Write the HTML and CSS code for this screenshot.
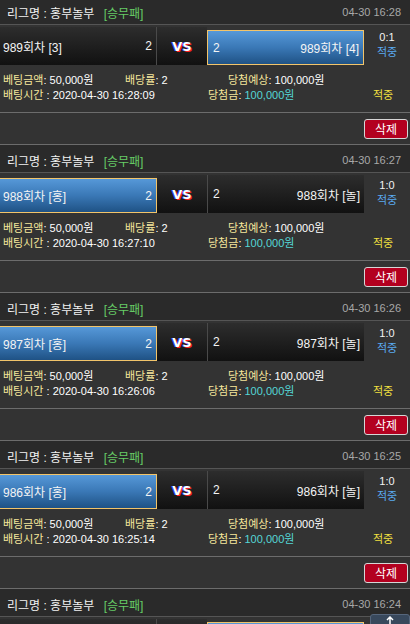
FILE: index.html
```html
<!DOCTYPE html>
<html lang="ko">
<head>
<meta charset="utf-8">
<link rel="stylesheet" href="styles.css">
</head>
<body>
<div class="list">

  <div class="bet">
    <div class="head"><span class="league">리그명 : 홍부놀부 <em>[승무패]</em></span><span class="time">04-30 16:28</span></div>
    <div class="match">
      <div class="team l"><span>989회차 [3]</span><span>2</span></div>
      <div class="vs">VS</div>
      <div class="team r on"><span>2</span><span>989회차 [4]</span></div>
      <div class="score"><div>0:1</div><div class="hit">적중</div></div>
    </div>
    <div class="info">
      <div class="row"><span class="c1"><b>베팅금액</b>: 50,000원</span><span class="c2"><b>배당률</b>: 2</span><span><b>당첨예상</b>: 100,000원</span></div>
      <div class="row"><span class="d1"><b>배팅시간</b> : 2020-04-30 16:28:09</span><span class="d2"><b>당첨금</b>: <i>100,000원</i></span><span class="res">적중</span></div>
    </div>
    <div class="actions"><button class="del">삭제</button></div>
  </div>

  <div class="bet">
    <div class="head"><span class="league">리그명 : 홍부놀부 <em>[승무패]</em></span><span class="time">04-30 16:27</span></div>
    <div class="match">
      <div class="team l on"><span>988회차 [홍]</span><span>2</span></div>
      <div class="vs">VS</div>
      <div class="team r"><span>2</span><span>988회차 [놀]</span></div>
      <div class="score"><div>1:0</div><div class="hit">적중</div></div>
    </div>
    <div class="info">
      <div class="row"><span class="c1"><b>베팅금액</b>: 50,000원</span><span class="c2"><b>배당률</b>: 2</span><span><b>당첨예상</b>: 100,000원</span></div>
      <div class="row"><span class="d1"><b>배팅시간</b> : 2020-04-30 16:27:10</span><span class="d2"><b>당첨금</b>: <i>100,000원</i></span><span class="res">적중</span></div>
    </div>
    <div class="actions"><button class="del">삭제</button></div>
  </div>

  <div class="bet">
    <div class="head"><span class="league">리그명 : 홍부놀부 <em>[승무패]</em></span><span class="time">04-30 16:26</span></div>
    <div class="match">
      <div class="team l on"><span>987회차 [홍]</span><span>2</span></div>
      <div class="vs">VS</div>
      <div class="team r"><span>2</span><span>987회차 [놀]</span></div>
      <div class="score"><div>1:0</div><div class="hit">적중</div></div>
    </div>
    <div class="info">
      <div class="row"><span class="c1"><b>베팅금액</b>: 50,000원</span><span class="c2"><b>배당률</b>: 2</span><span><b>당첨예상</b>: 100,000원</span></div>
      <div class="row"><span class="d1"><b>배팅시간</b> : 2020-04-30 16:26:06</span><span class="d2"><b>당첨금</b>: <i>100,000원</i></span><span class="res">적중</span></div>
    </div>
    <div class="actions"><button class="del">삭제</button></div>
  </div>

  <div class="bet">
    <div class="head"><span class="league">리그명 : 홍부놀부 <em>[승무패]</em></span><span class="time">04-30 16:25</span></div>
    <div class="match">
      <div class="team l on"><span>986회차 [홍]</span><span>2</span></div>
      <div class="vs">VS</div>
      <div class="team r"><span>2</span><span>986회차 [놀]</span></div>
      <div class="score"><div>1:0</div><div class="hit">적중</div></div>
    </div>
    <div class="info">
      <div class="row"><span class="c1"><b>베팅금액</b>: 50,000원</span><span class="c2"><b>배당률</b>: 2</span><span><b>당첨예상</b>: 100,000원</span></div>
      <div class="row"><span class="d1"><b>배팅시간</b> : 2020-04-30 16:25:14</span><span class="d2"><b>당첨금</b>: <i>100,000원</i></span><span class="res">적중</span></div>
    </div>
    <div class="actions"><button class="del">삭제</button></div>
  </div>

  <div class="bet">
    <div class="head"><span class="league">리그명 : 홍부놀부 <em>[승무패]</em></span><span class="time">04-30 16:24</span></div>
    <div class="match">
      <div class="team l"></div>
      <div class="vs"></div>
      <div class="team r on"></div>
      <div class="score"></div>
    </div>
  </div>

</div>
<div class="top-btn"><svg width="10" height="8" viewBox="0 0 10 8"><path d="M5 1 L5 8 M2 4 L5 1 L8 4" stroke="#fff" stroke-width="1.5" fill="none"/></svg></div>
</body>
</html>
```

FILE: styles.css
```css
html, body {
  margin: 0;
  padding: 0;
}
body {
  background: #333333;
  color: #eeeeee;
  font-family: "Liberation Sans", "Noto Sans CJK KR", sans-serif;
  font-size: 11px;
  overflow: hidden;
  height: 624px;
}
.list {
  margin-top: -4px;
}
.bet {
  border-top: 1px solid #6c6c6c;
}
.head {
  height: 28px;
  box-sizing: border-box;
  padding: 3px 9px 0 7px;
  background: #2a2a2a;
  border-bottom: 1px solid #555555;
  display: flex;
  align-items: center;
  justify-content: space-between;
}
.league {
  color: #f2f2f2;
  font-size: 12px;
}
.league em {
  font-style: normal;
  color: #66cc66;
  margin-left: 6px;
}
.time {
  color: #a8a8a8;
  font-size: 11px;
}
.match {
  display: flex;
  height: 41px;
  box-sizing: border-box;
  padding-top: 2px;
}
.team {
  width: 157px;
  height: 38px;
  box-sizing: border-box;
  padding: 0 4px 0 3px;
  display: flex;
  align-items: center;
  justify-content: space-between;
  background: linear-gradient(#2d2d2d, #111111);
  font-size: 12px;
  color: #f4f4f4;
}
.team.l {
  border-right: 1px solid #4a4a4a;
}
.team.r {
  border-left: 1px solid #4a4a4a;
  padding: 0 4px 0 5px;
}
.team.on {
  margin-top: 3px;
  height: 35px;
  border: 1px solid #f2c46a;
  background: linear-gradient(#5698d8, #3a78b6 50%, #1f5285);
}
.team.l.on {
  width: 157px;
  border-left: none;
}
.vs {
  width: 50px;
  height: 38px;
  background: linear-gradient(#2d2d2d, #111111);
  display: flex;
  align-items: center;
  justify-content: center;
  font-family: "DejaVu Sans", sans-serif;
  font-weight: bold;
  font-size: 13px;
  color: #ffffff;
  text-shadow: -1px 0 #2f45ff, 1px 1px #ff2020;
}
.score {
  width: 46px;
  box-sizing: border-box;
  padding-top: 3px;
  text-align: center;
  line-height: 15px;
  font-size: 11px;
  color: #f2f2f2;
}
.score .hit {
  color: #5aaaf0;
}
.info {
  height: 46px;
  box-sizing: border-box;
  padding: 7px 0 0 3px;
  line-height: 15px;
  font-size: 11px;
  color: #ffffff;
}
.info .row {
  display: flex;
}
.info b {
  font-weight: normal;
  color: #f6e79c;
}
.info i {
  font-style: normal;
  color: #55d6d6;
}
.c1 {
  width: 122px;
}
.c2 {
  width: 103px;
}
.d1 {
  width: 205px;
}
.d2 {
  width: 165px;
}
.res {
  color: #f2e040;
}
.actions {
  border-top: 1px solid #6c6c6c;
  height: 32px;
  box-sizing: border-box;
  display: flex;
  justify-content: flex-end;
  align-items: center;
  padding-right: 2px;
}
.del {
  width: 44px;
  height: 20px;
  padding: 0;
  margin: 0;
  background: #b3001f;
  border: 1px solid #d6d6d6;
  border-radius: 3px;
  color: #ffffff;
  font-family: "Noto Sans CJK KR", sans-serif;
  font-size: 12px;
  line-height: 18px;
}
.top-btn {
  position: fixed;
  right: 0;
  bottom: -22px;
  width: 40px;
  height: 32px;
  box-sizing: border-box;
  background: #38485c;
  border: 1px solid #56667c;
  border-radius: 3px;
  display: flex;
  justify-content: center;
  padding-top: 1px;
}
```
